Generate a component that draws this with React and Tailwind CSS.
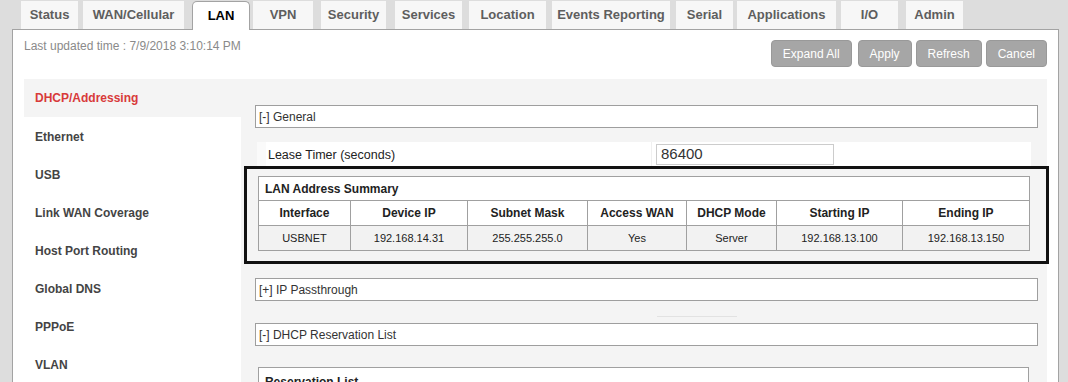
import React from 'react';

const tabs = [
  { label: 'Status', w: 'w-[57px]', ml: 'ml-0' },
  { label: 'WAN/Cellular', w: 'w-[101px]', ml: 'ml-[5px]' },
  { label: 'LAN', w: 'w-[58px]', ml: 'ml-[8px]', active: true },
  { label: 'VPN', w: 'w-[60px]', ml: 'ml-[3px]' },
  { label: 'Security', w: 'w-[65px]', ml: 'ml-[8px]' },
  { label: 'Services', w: 'w-[67px]', ml: 'ml-[9px]' },
  { label: 'Location', w: 'w-[77px]', ml: 'ml-[7px]' },
  { label: 'Events Reporting', w: 'w-[118px]', ml: 'ml-[6px]' },
  { label: 'Serial', w: 'w-[57px]', ml: 'ml-[6px]' },
  { label: 'Applications', w: 'w-[99px]', ml: 'ml-[4px]' },
  { label: 'I/O', w: 'w-[57px]', ml: 'ml-[5px]' },
  { label: 'Admin', w: 'w-[57px]', ml: 'ml-[8px]' },
];

const navItems = [
  'DHCP/Addressing',
  'Ethernet',
  'USB',
  'Link WAN Coverage',
  'Host Port Routing',
  'Global DNS',
  'PPPoE',
  'VLAN',
];

const columns = [
  { label: 'Interface', w: 'w-[92px]' },
  { label: 'Device IP', w: 'w-[117px]' },
  { label: 'Subnet Mask', w: 'w-[120px]' },
  { label: 'Access WAN', w: 'w-[99px]' },
  { label: 'DHCP Mode', w: 'w-[90px]' },
  { label: 'Starting IP', w: 'w-[126px]' },
  { label: 'Ending IP', w: 'w-[127px]' },
];

const summaryRow = ['USBNET', '192.168.14.31', '255.255.255.0', 'Yes', 'Server', '192.168.13.100', '192.168.13.150'];

const SectionHeader = ({ children }) => (
  <div className="h-[23px] border border-[#9e9e9e] bg-white flex items-center pl-[3px] text-[12px] text-[#333]">
    {children}
  </div>
);

const App = () => {
  return (
    <div className="w-[1068px] h-[382px] overflow-hidden bg-[#dddddd] font-['Liberation_Sans',Arial,sans-serif]">
      {/* Tabs */}
      <div className="h-[29px] flex items-start pt-[1px] pl-[21px]">
        {tabs.map((tab) =>
          tab.active ? (
            <div
              key={tab.label}
              className={`${tab.w} ${tab.ml} relative z-10 h-[29px] bg-white border border-b-0 border-[#a3a3a3] rounded-t-[5px] flex items-center justify-center text-[13px] font-bold text-black`}
            >
              {tab.label}
            </div>
          ) : (
            <div
              key={tab.label}
              className={`${tab.w} ${tab.ml} h-[28px] bg-[#f7f7f7] flex items-center justify-center text-[13px] font-bold text-[#5e5e5e]`}
            >
              {tab.label}
            </div>
          )
        )}
      </div>

      {/* Main panel */}
      <div className="ml-[12px] w-[1047px] h-[353px] border border-b-0 border-[#a3a3a3] bg-white">
        <div className="h-[49px] flex justify-between pl-[11px] pr-[11px]">
          <div className="pt-[9px] text-[12px] leading-[14px] text-[#8a8a8a]">
            Last updated time : 7/9/2018 3:10:14 PM
          </div>
          <div className="flex items-start pt-[10px]">
            <button className="h-[27px] px-[11px] rounded-[4px] bg-[#a6a6a6] border border-[#999] text-white text-[12px]">Expand All</button>
            <button className="ml-[6px] h-[27px] px-[11px] rounded-[4px] bg-[#a6a6a6] border border-[#999] text-white text-[12px]">Apply</button>
            <button className="ml-[4px] h-[27px] px-[11px] rounded-[4px] bg-[#a6a6a6] border border-[#999] text-white text-[12px]">Refresh</button>
            <button className="ml-[4px] h-[27px] px-[11px] rounded-[4px] bg-[#a6a6a6] border border-[#999] text-white text-[12px]">Cancel</button>
          </div>
        </div>

        <div className="flex pl-[11px] pr-[11px] h-[304px]">
          {/* Left nav */}
          <div className="w-[218px] bg-white">
            {navItems.map((item, i) => (
              <div
                key={item}
                className={`h-[38px] flex items-center pl-[11px] text-[12px] font-bold ${
                  i === 0 ? 'bg-[#f4f4f4] text-[#d83a3a]' : 'pt-[2px] text-[#444]'
                }`}
              >
                {item}
              </div>
            ))}
          </div>

          {/* Content */}
          <div className="flex-1 bg-[#f4f4f4] pt-[26px] pl-[14px] pr-[9px]">
            <SectionHeader>[-] General</SectionHeader>

            <div className="mt-[14px] ml-[2px] mr-[7px] h-[24px] flex">
              <div className="w-[9px] bg-[#fafafa]" />
              <div className="w-[385px] bg-white flex items-center pt-[3px] pl-[2px] text-[12.5px] text-[#222]">
                Lease Timer (seconds)
              </div>
              <div className="flex-1 bg-white flex items-center pl-[4px] border-l border-[#f0f0f0]">
                <div className="w-[178px] h-[21px] border border-[#cccccc] bg-white flex items-center pl-[4px] text-[15px] text-[#333]">
                  86400
                </div>
              </div>
            </div>

            {/* LAN Address Summary */}
            <div className="-mx-[11px] border-[3px] border-[#111] pt-[7px] pb-[10px] pl-[11px] pr-[16px]">
              <table className="w-full border-collapse table-fixed text-[#222]">
                <colgroup>
                  {columns.map((col) => (
                    <col key={col.label} className={col.w} />
                  ))}
                </colgroup>
                <thead>
                  <tr className="h-[24px] bg-white">
                    <th colSpan={7} className="border border-[#a0a0a0] text-left pl-[6px] text-[12px] font-bold">
                      LAN Address Summary
                    </th>
                  </tr>
                  <tr className="h-[25px] bg-white">
                    {columns.map((col) => (
                      <th key={col.label} className="border border-[#a0a0a0] text-center text-[12px] font-bold">
                        {col.label}
                      </th>
                    ))}
                  </tr>
                </thead>
                <tbody>
                  <tr className="h-[25px] bg-[#f2f2f2]">
                    {summaryRow.map((val, i) => (
                      <td key={i} className="border border-[#a0a0a0] text-center text-[11px]">
                        {val}
                      </td>
                    ))}
                  </tr>
                </tbody>
              </table>
            </div>

            <div className="mt-[14px]">
              <SectionHeader>[+] IP Passthrough</SectionHeader>
            </div>

            <div className="mt-[15px] ml-[402px] w-[80px] h-[1px] bg-[#e2e2e2]" />

            <div className="mt-[6px]">
              <SectionHeader>[-] DHCP Reservation List</SectionHeader>
            </div>

            <div className="mt-[21px] ml-[3px] w-[771px] h-[40px] border border-[#a0a0a0] bg-white pl-[6px] pt-[5px] text-[12px] font-bold text-[#222]">
              Reservation List
            </div>
          </div>
        </div>
      </div>
    </div>
  );
};

export default App;
